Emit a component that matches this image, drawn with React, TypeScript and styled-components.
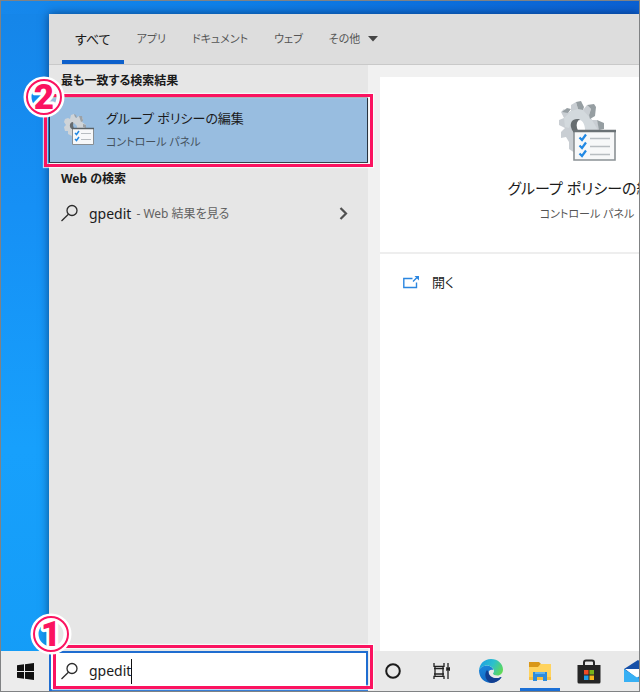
import React, { useState } from 'react';
import styled, { createGlobalStyle } from 'styled-components';

const GlobalStyle = createGlobalStyle`
  * { box-sizing: border-box; }
  body {
    margin: 0;
    font-family: "Noto Sans", "Noto Sans CJK JP", sans-serif;
    font-feature-settings: "palt";
    color: #1b1b1b;
  }
  button, input { font: inherit; font-feature-settings: inherit; color: inherit; }
`;

const PINK = '#fb1360';

const Desktop = styled.main`
  display: flex;
  flex-direction: column;
  height: 100vh;
  border: 1px solid #808284;
  overflow: hidden;
  background:
    linear-gradient(90deg, #1688ec 0%, #0f80e8 35%, #0b60d2 100%) top / 100% 13px no-repeat,
    linear-gradient(180deg, #1585e8 0%, #1690f5 30%, #17a0fc 65%, #149cf6 100%);
`;

const Flyout = styled.section`
  display: flex;
  flex-direction: column;
  flex: 1;
  min-height: 0;
  margin: 13px 0 0 48px;
  background: #f1f1f1;
  box-shadow: 0 0 9px rgba(0, 20, 60, 0.6);
`;

const Tabs = styled.nav`
  display: flex;
  height: 51px;
  flex: none;
  padding-left: 13px;
  background: #dddddd;
  border-bottom: 1px solid #c9c9c9;
`;

const Tab = styled.button<{ $active?: boolean }>`
  display: flex;
  align-items: center;
  gap: 8px;
  padding: 3px 13px 0;
  border: 0;
  border-bottom: 4px solid ${(p) => (p.$active ? '#0d60cb' : 'transparent')};
  background: none;
  color: ${(p) => (p.$active ? '#1b1b1b' : '#555555')};
  font-size: ${(p) => (p.$active ? '13px' : '11px')};
  line-height: 20px;
  white-space: nowrap;
`;

const Columns = styled.div`
  display: flex;
  flex: 1;
  min-height: 0;
`;

const Results = styled.div`
  flex: 0 0 319px;
  background: #e6e6e6;
`;

const GroupTitle = styled.h2`
  margin: 0;
  padding: 0 12px;
  font-size: 12px;
  font-weight: 700;
  line-height: 32px;
`;

const BestMatch = styled.div`
  position: relative;
`;

const BestMatchButton = styled.button`
  display: flex;
  align-items: center;
  gap: 11px;
  width: 100%;
  height: 66px;
  padding: 0 12px;
  border: 1px solid #27333f;
  background: #98bde0;
  text-align: left;
`;

const ResultName = styled.strong`
  display: block;
  font-size: 13px;
  font-weight: 400;
  line-height: 24px;
`;

const ResultKind = styled.span`
  display: block;
  color: #44515d;
  font-size: 11px;
  line-height: 24px;
`;

const WebResult = styled.button`
  display: flex;
  align-items: center;
  width: 100%;
  height: 36px;
  padding: 0 20px 0 12px;
  border: 0;
  background: none;
  text-align: left;
  font-size: 14px;
`;

const Query = styled.span`
  margin-left: 11px;
`;

const QueryHint = styled.span`
  flex: 1;
  margin-left: 5px;
  color: #626262;
  font-size: 12px;
`;

const Preview = styled.div`
  flex: 1;
  min-width: 0;
  padding: 12px 0 0 12px;
  overflow: hidden;
`;

const PreviewCard = styled.article`
  display: flex;
  flex-direction: column;
  width: 100%;
  min-width: 414px;
  height: 100%;
  background: #ffffff;
`;

const PreviewHead = styled.header`
  display: flex;
  flex-direction: column;
  align-items: center;
  height: 177px;
  padding-top: 23px;
  border-bottom: 2px solid #eeeeee;
`;

const PreviewTitle = styled.h1`
  margin: 12px 0 0;
  font-size: 15px;
  font-weight: 400;
  line-height: 28px;
`;

const PreviewKind = styled.p`
  margin: 0;
  color: #555555;
  font-size: 11px;
  line-height: 24px;
`;

const OpenAction = styled.button`
  display: flex;
  align-items: center;
  gap: 13px;
  padding: 18px 23px;
  border: 0;
  background: none;
  font-size: 13px;
  line-height: 20px;
`;

const Taskbar = styled.footer`
  display: flex;
  flex: none;
  height: 40px;
  position: relative;
  background: #e9e9e9;
`;

const TaskButton = styled.button<{ $running?: boolean }>`
  display: flex;
  align-items: center;
  justify-content: center;
  flex: 0 0 49px;
  padding: 0;
  border: 0;
  background: ${(p) =>
    p.$running ? 'linear-gradient(#1b6fd6, #1b6fd6) bottom / 40px 3px no-repeat' : 'none'};
`;

const StartButton = styled(TaskButton)`
  flex-basis: 48px;
  background: #ececec;
`;

const SearchWrap = styled.div`
  position: relative;
  flex: 0 0 319px;
`;

const SearchBox = styled.label`
  display: flex;
  align-items: center;
  height: 100%;
  padding: 0 10px;
  border: 2px solid #1f6dd0;
  background: #ffffff;
`;

const SearchInput = styled.input`
  field-sizing: content;
  min-width: 1px;
  margin-left: 11px;
  padding: 0;
  border: 0;
  outline: 0;
  background: none;
  font-size: 14px;
  line-height: 24px;
`;

const TextCaret = styled.span`
  width: 1px;
  height: 25px;
  background: #111111;
`;

const Highlight = styled.div<{ $place: 'result' | 'search' }>`
  position: absolute;
  inset: ${(p) => (p.$place === 'result' ? '-3px -5px -4px -5px' : '-6px -5px 2px 4px')};
  border: 3px solid ${PINK};
  box-shadow: 0 0 1px 1px rgba(255, 255, 255, 0.7), inset 0 0 1px 1px rgba(255, 255, 255, 0.7);
  pointer-events: none;
`;

const BadgeDrawing = styled.svg<{ $place: 'result' | 'search' }>`
  position: absolute;
  top: ${(p) => (p.$place === 'result' ? '-21px' : '-35px')};
  left: ${(p) => (p.$place === 'result' ? '-24px' : '-26px')};
  overflow: visible;
`;

const Callout = ({ place, step }: { place: 'result' | 'search'; step: string }) => (
  <Highlight $place={place}>
    <BadgeDrawing $place={place} width="42" height="42" viewBox="0 0 42 42" role="img" aria-label={step}>
      <circle cx="21" cy="21" r="16.5" fill="none" stroke="#fff" strokeWidth="8" />
      <text
        x="21"
        y="33"
        textAnchor="middle"
        fontFamily="Roboto"
        fontWeight="900"
        fontSize="35"
        fill={PINK}
        stroke="#fff"
        strokeWidth="6"
        strokeLinejoin="round"
        paintOrder="stroke"
      >
        {step}
      </text>
      <circle cx="21" cy="21" r="17" fill="none" stroke={PINK} strokeWidth="2" />
    </BadgeDrawing>
  </Highlight>
);

const PolicyIcon = ({ width, height }: { width: number; height: number }) => (
  <svg width={width} height={height} viewBox="0 0 60 62" aria-hidden="true">
    <path
      fillRule="evenodd"
      fill="#c9ced3"
      d="M4 12 7 9 11 13 14 11V5L19 2 21 9 26 10 30 5 34 9 32 15 35 20H40L42 27V34H18V53L12 49V42L9 37 4 38V32L8 28 2 25V20L7 18ZM16 24C16 29 18 33 22 33H25L27 24 22 20C18 20 16 21 16 24Z"
    />
    <path fill="#d3d9dd" d="M14 11 21 9 26 10 35 20 41 30H27L25 22 20 19 15 21 12 28 8 27 7 18Z" />
    <path
      fill="#969ea2"
      d="M19 2 24 1 27 7 26 10 21 9ZM30 5 37 4 39 7 38 16 33 19 32 15 34 9ZM40 20 47 23V29L42 30ZM5 12 10 8 14 9 11 13Z"
    />
    <path fill="#686e71" d="M20 19C15 19 13 23 14 27 15 32 18 34 22 33L20 28C19 24 20 21 23 19Z" />
    <path fill="#fff" d="M23 20C20 23 21 28 24 32L28 30C28 25 26 21 23 20Z" />
    <path fill="#f7f8f9" stroke="#8b9195" strokeWidth="1.6" d="M17 31H58V60H17Z" />
    <path fill="none" stroke="#6b7276" strokeWidth="2.4" d="M16 31H59" />
    <path fill="none" stroke="#b8bdc1" strokeWidth="1.4" d="M33 38.5H53M33 46.5H53M33 54.5H53" />
    <path
      fill="none"
      stroke="#2289e4"
      strokeWidth="2.2"
      d="M22.5 37.5 25 40 29 34.500M22.500 45.500 25 48 29 42.500M22.500 53.500 25 56 29 50.500"
    />
  </svg>
);

const PolicySmallIcon = () => (
  <svg width="33" height="34" viewBox="0 0 33 34" aria-hidden="true">
    <path
      fill="#cfd4d8"
      d="M3 6 6 5 8 6 9 2 12 1 14 5 17 3 21 5 20 9 24 12 23 16H10V23L6 21 6 18 3 18 2 14 4 12 2 9Z"
    />
    <path fill="#9ba1a6" d="M12 1 14 2 15 5 13 4ZM17 3 20 3 21 8 19 9ZM21 11 24 12V15L21 14Z" />
    <path fill="#666c70" d="M11 9C7 9 7 15 10 16H14L12 13Z" />
    <path fill="#98bde0" d="M12 10 15 13V16H12L11 12Z" />
    <path fill="#f7f8f9" stroke="#888e93" d="M10.500 15.500H31.500V31.500H10.500Z" />
    <path stroke="#596065" strokeWidth="1.500" d="M10 15.500H32" />
    <path stroke="#b8bdc1" d="M19 20.500H29M19 26.500H29" />
    <path fill="none" stroke="#2289e4" strokeWidth="1.500" d="M13 20 14.500 21.500 17 18M13 26 14.500 27.500 17 24" />
  </svg>
);

const MagnifierIcon = () => (
  <svg width="17" height="18" viewBox="0 0 17 18" fill="none" stroke="#2b2b2b" strokeWidth="1.3" aria-hidden="true">
    <circle cx="11" cy="6.500" r="5" />
    <path d="M7.400 10.200 0.500 17" />
  </svg>
);

const ChevronIcon = () => (
  <svg width="9" height="13" viewBox="0 0 9 13" fill="none" stroke="#505050" strokeWidth="2.200" aria-hidden="true">
    <path d="M1.500 1 7 6.500 1.500 12" />
  </svg>
);

const MoreIcon = () => (
  <svg width="10" height="6" viewBox="0 0 10 6" aria-hidden="true">
    <path fill="#454545" d="M0 0H10L5 5.500Z" />
  </svg>
);

const OpenIcon = () => (
  <svg width="16" height="13" viewBox="0 0 16 13" fill="none" stroke="#2b86e0" strokeWidth="1.400" aria-hidden="true">
    <path d="M9.500 2.500H.8V11.500H13.500V6.500M10 5.500 14.500 1" />
    <path fill="#2b86e0" stroke="none" d="M11.500 0H16V4.500Z" />
  </svg>
);

const WindowsIcon = () => (
  <svg width="17" height="17" viewBox="0 0 17 17" fill="#111" aria-hidden="true">
    <path d="M0 2.300 7 1.300V8H0ZM8 1.200 17 0V8H8ZM0 9H7V15.700L0 14.700ZM8 9H17V17L8 15.800Z" />
  </svg>
);

const CortanaIcon = () => (
  <svg width="16" height="16" viewBox="0 0 16 16" aria-hidden="true">
    <circle cx="8" cy="8" r="6.800" fill="none" stroke="#1c1c1c" strokeWidth="2" />
  </svg>
);

const TaskViewIcon = () => (
  <svg width="18" height="16" viewBox="0 0 18 16" fill="none" stroke="#222" strokeWidth="1.300" aria-hidden="true">
    <path d="M1 0V3.300H11V0M2 3.300V13.300M10 3.300V13.300M1 5.500H11M1 11H11M1 16V13.300H11V16M15 0V4M15 8V16" />
    <path fill="#222" stroke="none" d="M13.200 4.200H17V7.800H13.200Z" />
  </svg>
);

const EdgeIcon = () => (
  <svg width="24" height="24" viewBox="0 0 24 24" aria-hidden="true">
    <defs>
      <linearGradient id="edge-top" x1="0" y1="0.300" x2="1" y2="0.700">
        <stop offset="0" stopColor="#1e9fe2" />
        <stop offset="0.500" stopColor="#2cc0cc" />
        <stop offset="1" stopColor="#62da52" />
      </linearGradient>
      <linearGradient id="edge-side" x1="0" y1="0" x2="0.400" y2="1">
        <stop offset="0" stopColor="#1c87dc" />
        <stop offset="1" stopColor="#1269c4" />
      </linearGradient>
    </defs>
    <path
      fill="url(#edge-side)"
      d="M0 11C2 7 6 6 9 6.500 12 7 14 9 14.500 11 11 10 9 12 9.500 15 10 19 15 21 20 19 21 18.600 22.500 18 22.300 18.500 19 23 14 24.500 9 23.500 3 22 0 17 0 11Z"
    />
    <path fill="#123f91" d="M8 11C5 15 6 21 11 23.800 16 24.500 20 22 22.400 18.500 22.500 18 22 17.900 21.500 18.200 16 20.500 10 18 9.500 13Z" />
    <path
      fill="url(#edge-top)"
      d="M0 11.500C.5 5 5 0 12 0 19 0 24 5 24 10.500 24 14 21.500 16.500 18.500 16.500 16 16.500 14 15.600 14 14.800 14 14.200 15 13.800 15 12 15 9 11.500 6.500 8 6.500 4 6.500 1 9 0 11.500Z"
    />
  </svg>
);

const FolderIcon = () => (
  <svg width="24" height="21" viewBox="0 0 24 21" aria-hidden="true">
    <path fill="#d9971a" d="M1 1H11L13 3V8H1Z" />
    <path fill="#ffd35e" d="M1 6H10L12.500 3H23V19H1Z" />
    <path fill="#f8bf3e" d="M1 16H23V19H1Z" />
    <path fill="#2f8cdb" d="M5 11H19V20H15V16H9V20H5Z" />
    <path fill="#5fb3ef" d="M7 11H17V13H7Z" />
  </svg>
);

const StoreIcon = () => (
  <svg width="24" height="25" viewBox="0 0 24 25" aria-hidden="true">
    <path fill="none" stroke="#292929" strokeWidth="2" d="M7 8V3.500Q7 1.500 9 1.500H15Q17 1.500 17 3.500V8" />
    <path fill="#252525" d="M.5 6H23.500V23Q23.500 24.500 22 24.500H2Q.5 24.500 .5 23Z" />
    <path fill="#f04b25" d="M7 11H11.500V15.500H7Z" />
    <path fill="#78b51b" d="M12.500 11H17V15.500H12.500Z" />
    <path fill="#1e9de9" d="M7 16.500H11.500V21H7Z" />
    <path fill="#f8b91a" d="M12.500 16.500H17V21H12.500Z" />
  </svg>
);

const MailIcon = () => (
  <svg width="28" height="23" viewBox="0 0 28 23" aria-hidden="true">
    <path fill="#1650a8" d="M0 9 14 0 28 9V16H0Z" />
    <path fill="#fff" d="M1 9H27V14L14 19Z" />
    <path fill="#1a8fe0" d="M28 9V22H6L14 17Z" />
    <path fill="#37b0f4" d="M0 9 20 22H0Z" />
  </svg>
);

const tabs = ['すべて', 'アプリ', 'ドキュメント', 'ウェブ'];

export default function App() {
  const [query, setQuery] = useState('gpedit');

  return (
    <>
      <GlobalStyle />
      <Desktop>
        <Flyout>
          <Tabs>
            {tabs.map((name, i) => (
              <Tab key={name} $active={i === 0}>
                {name}
              </Tab>
            ))}
            <Tab>
              その他
              <MoreIcon />
            </Tab>
          </Tabs>
          <Columns>
            <Results>
              <GroupTitle>最も一致する検索結果</GroupTitle>
              <BestMatch>
                <BestMatchButton>
                  <PolicySmallIcon />
                  <span>
                    <ResultName>グループ ポリシーの編集</ResultName>
                    <ResultKind>コントロール パネル</ResultKind>
                  </span>
                </BestMatchButton>
                <Callout place="result" step="2" />
              </BestMatch>
              <GroupTitle>Web の検索</GroupTitle>
              <WebResult>
                <MagnifierIcon />
                <Query>gpedit</Query>
                <QueryHint>- Web 結果を見る</QueryHint>
                <ChevronIcon />
              </WebResult>
            </Results>
            <Preview>
              <PreviewCard>
                <PreviewHead>
                  <PolicyIcon width={60} height={62} />
                  <PreviewTitle>グループ ポリシーの編集</PreviewTitle>
                  <PreviewKind>コントロール パネル</PreviewKind>
                </PreviewHead>
                <OpenAction>
                  <OpenIcon />
                  開く
                </OpenAction>
              </PreviewCard>
            </Preview>
          </Columns>
        </Flyout>
        <Taskbar>
          <StartButton aria-label="スタート">
            <WindowsIcon />
          </StartButton>
          <SearchWrap>
            <SearchBox>
              <MagnifierIcon />
              <SearchInput aria-label="検索" value={query} onChange={(e) => setQuery(e.target.value)} />
              <TextCaret />
            </SearchBox>
            <Callout place="search" step="1" />
          </SearchWrap>
          <TaskButton aria-label="Cortana">
            <CortanaIcon />
          </TaskButton>
          <TaskButton aria-label="タスク ビュー">
            <TaskViewIcon />
          </TaskButton>
          <TaskButton aria-label="Microsoft Edge">
            <EdgeIcon />
          </TaskButton>
          <TaskButton $running aria-label="エクスプローラー">
            <FolderIcon />
          </TaskButton>
          <TaskButton aria-label="Microsoft Store">
            <StoreIcon />
          </TaskButton>
          <TaskButton aria-label="メール">
            <MailIcon />
          </TaskButton>
        </Taskbar>
      </Desktop>
    </>
  );
}
